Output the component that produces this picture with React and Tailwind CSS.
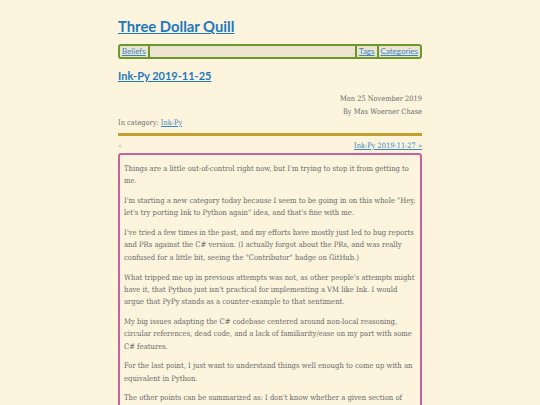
import React from 'react';

const paragraphs = [
    "Things are a little out-of-control right now, but I'm trying to stop it from getting to me.",
    "I'm starting a new category today because I seem to be going in on this whole \"Hey, let's try porting Ink to Python again\" idea, and that's fine with me.",
    "I've tried a few times in the past, and my efforts have mostly just led to bug reports and PRs against the C# version. (I actually forgot about the PRs, and was really confused for a little bit, seeing the \"Contributor\" badge on GitHub.)",
    "What tripped me up in previous attempts was not, as other people's attempts might have it, that Python just isn't practical for implementing a VM like Ink. I would argue that PyPy stands as a counter-example to that sentiment.",
    "My big issues adapting the C# codebase centered around non-local reasoning, circular references, dead code, and a lack of familiarity/ease on my part with some C# features.",
    "For the last point, I just want to understand things well enough to come up with an equivalent in Python.",
    "The other points can be summarized as: I don't know whether a given section of code is relevant, or how it relates to the rest of the system.",
];

const sans = "font-['Lato',_'Open_Sans',_sans-serif]";
const serif = "font-['DejaVu_Serif_Condensed',_'DejaVu_Serif',_serif] font-stretch-condensed";

const App = () => {
    return (
        <div className="min-h-screen bg-[#fcf4dd] overflow-hidden">
            <div className="w-[304px] mx-auto pt-[15px]">
                {/* Título del sitio */}
                <h1 className={`${sans} text-[14.8px] font-bold leading-[22px] text-[#1d78c1] underline`}>
                    Three Dollar Quill
                </h1>

                {/* Navegación */}
                <nav className={`${sans} mt-[7px] flex items-stretch h-[15px] border-2 border-[#6b982b] rounded-[3px] bg-[#ece4cf] text-[8px] leading-[11px]`}>
                    <a className="px-[2px] text-[#3a86c4] underline border-r-2 border-[#6b982b]">Beliefs</a>
                    <div className="flex-1" />
                    <a className="px-[2px] text-[#3a86c4] underline border-l-2 border-[#6b982b]">Tags</a>
                    <a className="px-[2px] text-[#3a86c4] underline border-l-2 border-[#6b982b]">Categories</a>
                </nav>

                {/* Título del post */}
                <h2 className={`${sans} mt-[8px] text-[11px] font-bold leading-[18px] text-[#1d78c1] underline`}>
                    Ink-Py 2019-11-25
                </h2>

                <div className={`${serif} mt-[7px] text-[7.4px] leading-[13px] text-[#6b6b6b]`}>
                    <p className="text-right">Mon 25 November 2019</p>
                    <p className="text-right">By Max Woerner Chase</p>
                    <p className="-mt-[2px]">In category: <a className="text-[#3a86c4] underline">Ink-Py</a></p>
                </div>

                <div className="mt-[4px] h-[3px] bg-[#c3a02e]" />

                <div className={`${serif} mt-[4px] flex justify-between text-[7.4px] leading-[12px]`}>
                    <span className="text-[#b9b3a3]">«</span>
                    <a className="text-[#3a86c4] underline">Ink-Py 2019-11-27 »</a>
                </div>

                {/* Contenido */}
                <article className={`${serif} mt-[1px] border-2 border-[#c9619f] rounded-[3px] px-[4px] pt-[8px] pb-[10px] text-[7.6px] leading-[12.3px] text-[#6a6a6a]`}>
                    {paragraphs.map((p, i) => (
                        <p key={i} className="mb-[7.5px]">{p}</p>
                    ))}
                </article>
            </div>
        </div>
    );
};

export default App;
